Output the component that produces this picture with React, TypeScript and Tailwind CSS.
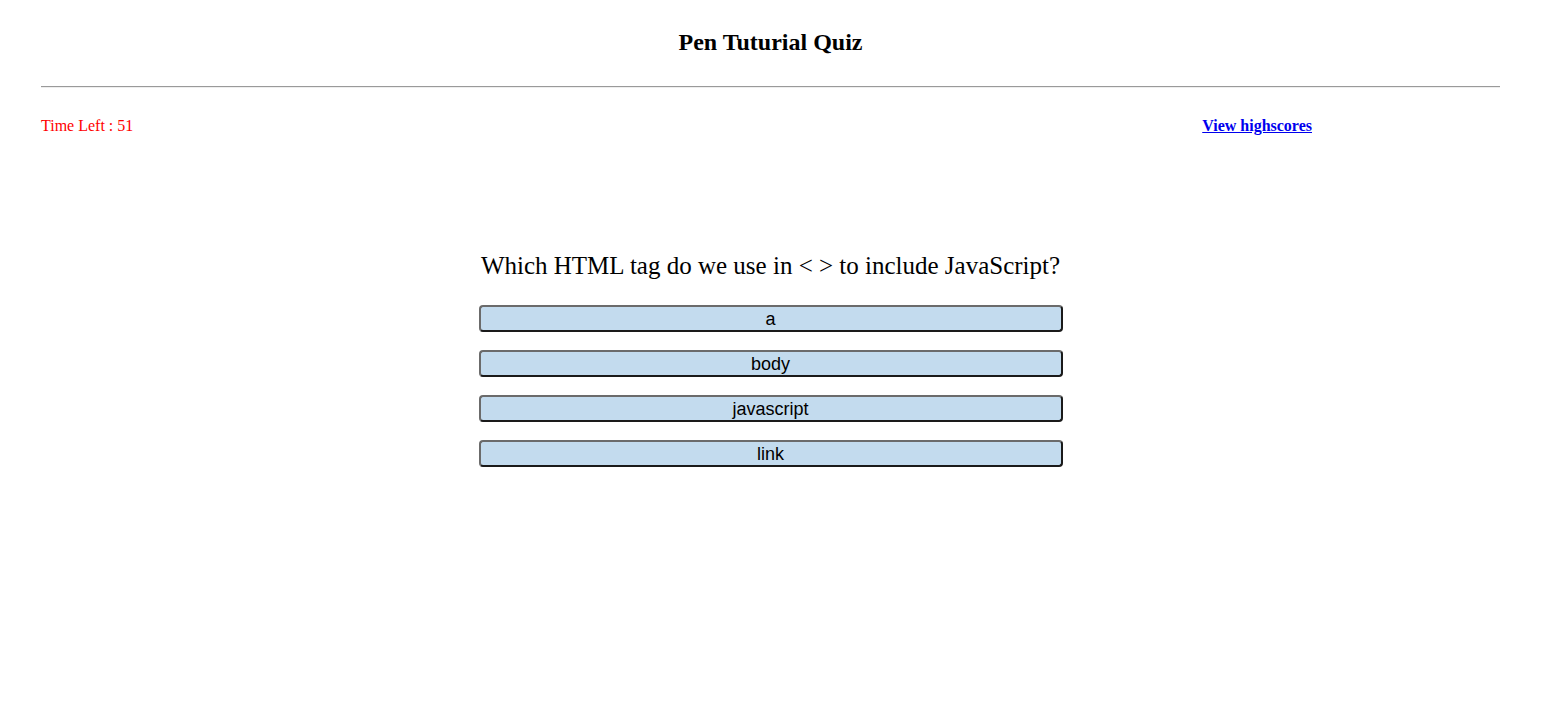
import { useState } from "react";

const choices = ["a", "body", "javascript", "link"];

export default function App() {
  const [timeLeft] = useState(51);

  return (
    <div className="min-h-[726px] bg-white pl-[41px] pr-[48px] font-['Liberation_Serif',serif] text-black">
      {/* Header */}
      <header className="pt-[26px] text-center">
        <h1 className="text-[24px] font-bold leading-[32px]">Pen Tuturial Quiz</h1>
      </header>
      <hr className="mt-[28px] border-0 border-t border-t-[#9a9a9a] border-b border-b-[#eeeeee]" />

      {/* Status row */}
      <div className="mt-[28px] flex items-center justify-between text-[16px] leading-[20px]">
        <span className="text-[#ff0000]">Time Left : {timeLeft}</span>
        <a href="#" className="mr-[188px] font-bold text-[#0000ee] underline">
          View highscores
        </a>
      </div>

      {/* Question */}
      <main className="mt-[114px] flex flex-col items-center">
        <h2 className="text-[25px] leading-[31px]">
          Which HTML tag do we use in &lt; &gt; to include JavaScript?
        </h2>
        <div className="mt-[24px] flex flex-col gap-[18px]">
          {choices.map((choice) => (
            <button
              key={choice}
              className="h-[27px] w-[584px] rounded-[4px] border-2 border-t-[#6b6b6b] border-l-[#6b6b6b] border-b-[#1a1a1a] border-r-[#1a1a1a] bg-[#c3dbee] font-['Liberation_Sans',sans-serif] text-[18px] leading-[22px] text-black"
            >
              {choice}
            </button>
          ))}
        </div>
      </main>
    </div>
  );
}
